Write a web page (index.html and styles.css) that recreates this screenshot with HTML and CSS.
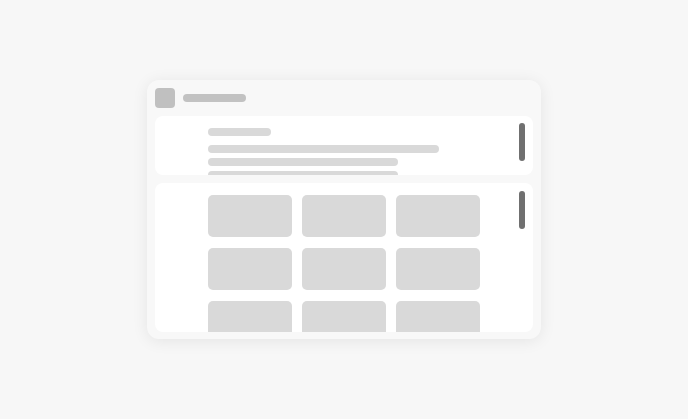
FILE: index.html
```html
<!DOCTYPE html>
<html>
<head>
<meta charset="utf-8">
<link rel="stylesheet" href="styles.css">
</head>
<body>
<div class="stage">
  <div class="card">
    <div class="header">
      <div class="avatar"></div>
      <div class="title-bar"></div>
    </div>
    <div class="panel panel-text">
      <div class="text-content">
        <div class="bar bar-title"></div>
        <div class="lines">
          <div class="bar bar-long"></div>
          <div class="bar bar-mid"></div>
          <div class="bar bar-mid"></div>
        </div>
      </div>
      <div class="thumb thumb-1"></div>
    </div>
    <div class="panel panel-grid">
      <div class="grid">
        <div class="tile"></div><div class="tile"></div><div class="tile"></div>
        <div class="tile"></div><div class="tile"></div><div class="tile"></div>
        <div class="tile"></div><div class="tile"></div><div class="tile"></div>
      </div>
      <div class="thumb thumb-2"></div>
    </div>
  </div>
</div>
</body>
</html>
```
FILE: styles.css
```css
html, body {
  margin: 0;
  padding: 0;
  background: #f7f7f7;
  font-family: "Liberation Sans", Arial, sans-serif;
}
.stage {
  width: 688px;
  height: 419px;
  display: flex;
  align-items: center;
  justify-content: center;
}
.card {
  box-sizing: border-box;
  width: 394px;
  height: 259px;
  padding: 8px 8px 7px 8px;
  background: #f8f8f8;
  border-radius: 12px;
  box-shadow: 0 2px 16px rgba(0, 0, 0, 0.08);
  display: flex;
  flex-direction: column;
  gap: 8px;
}
.header {
  height: 20px;
  display: flex;
  align-items: center;
  gap: 8px;
}
.avatar {
  width: 20px;
  height: 20px;
  border-radius: 4px;
  background: #c0c0c0;
}
.title-bar {
  width: 63px;
  height: 8px;
  border-radius: 4px;
  background: #c2c2c2;
}
.panel {
  position: relative;
  background: #ffffff;
  border-radius: 8px;
  overflow: hidden;
}
.panel-text {
  height: 59px;
  flex: none;
}
.panel-grid {
  flex: 1;
}
.text-content {
  padding: 12px 0 0 53px;
}
.bar {
  height: 8px;
  border-radius: 4px;
  background: #d9d9d9;
}
.bar-title {
  width: 63px;
  margin-bottom: 9px;
}
.lines {
  display: flex;
  flex-direction: column;
  gap: 5px;
}
.bar-long { width: 231px; }
.bar-mid { width: 190px; }
.grid {
  padding: 12px 0 0 53px;
  display: grid;
  grid-template-columns: repeat(3, 84px);
  grid-auto-rows: 42px;
  column-gap: 10px;
  row-gap: 11px;
}
.tile {
  background: #d9d9d9;
  border-radius: 5px;
}
.thumb {
  position: absolute;
  right: 8px;
  width: 6px;
  height: 38px;
  border-radius: 3px;
  background: #707070;
}
.thumb-1 { top: 7px; }
.thumb-2 { top: 8px; }
```
